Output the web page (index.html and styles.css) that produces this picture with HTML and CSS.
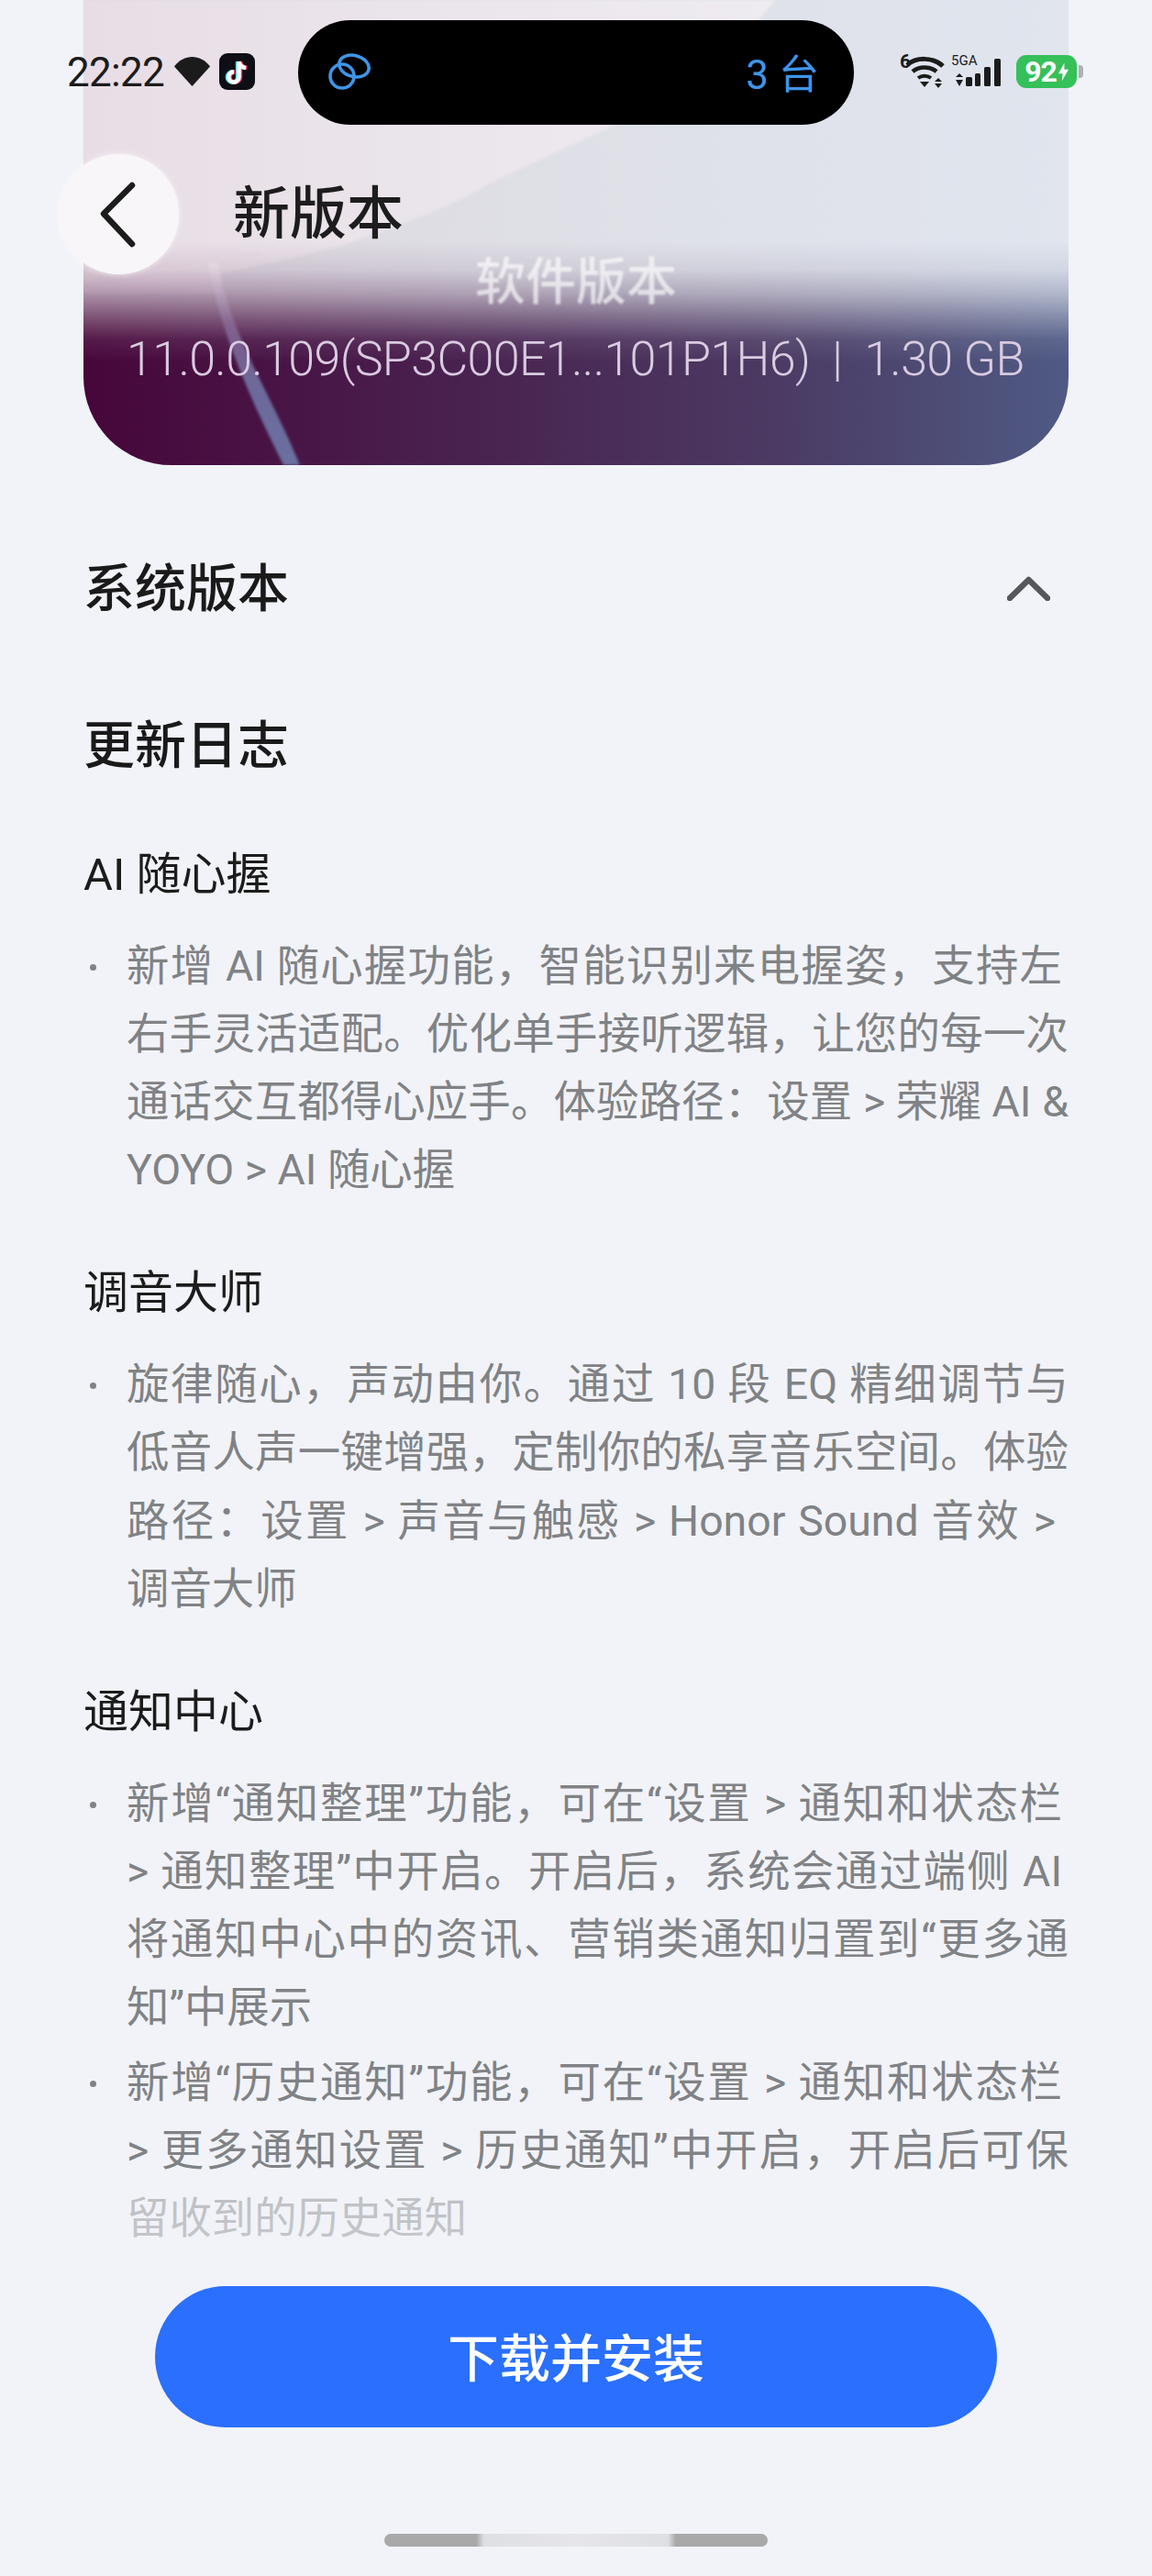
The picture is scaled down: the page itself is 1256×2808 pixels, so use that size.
FILE: index.html
```html
<!DOCTYPE html>
<html lang="zh-CN">
<head>
    <meta charset="UTF-8">
    <meta name="viewport" content="width=device-width, initial-scale=1.0">
    <title>新版本</title>
    <link rel="stylesheet" href="styles.css">
</head>
<body>
    <div class="hero">
        <svg class="hero-art" viewBox="0 0 1074 507" preserveAspectRatio="none">
            <defs>
                <linearGradient id="darkGrad" x1="0" y1="0" x2="1" y2="0">
                    <stop offset="0" stop-color="#47063a"/>
                    <stop offset="0.4" stop-color="#492350"/>
                    <stop offset="0.7" stop-color="#4b3a63"/>
                    <stop offset="1" stop-color="#4f5a84"/>
                </linearGradient>
                <linearGradient id="greyGrad" x1="0" y1="0" x2="1" y2="0">
                    <stop offset="0" stop-color="#ddd6de"/>
                    <stop offset="0.5" stop-color="#dfe0e7"/>
                    <stop offset="1" stop-color="#e0e5ee"/>
                </linearGradient>
                <linearGradient id="arcGrad" x1="0" y1="0" x2="1" y2="0">
                    <stop offset="0" stop-color="#e8dde5"/>
                    <stop offset="0.5" stop-color="#eae5eb"/>
                    <stop offset="1" stop-color="#eeebf1"/>
                </linearGradient>
                <linearGradient id="fadeGrad" x1="0" y1="0" x2="0" y2="1">
                    <stop offset="0.52" stop-color="#fff" stop-opacity="1"/>
                    <stop offset="0.58" stop-color="#fff" stop-opacity="0.9"/>
                    <stop offset="0.63" stop-color="#fff" stop-opacity="0.68"/>
                    <stop offset="0.68" stop-color="#fff" stop-opacity="0.38"/>
                    <stop offset="0.73" stop-color="#fff" stop-opacity="0.1"/>
                    <stop offset="0.78" stop-color="#fff" stop-opacity="0"/>
                </linearGradient>
                <linearGradient id="ribbonGrad" x1="0" y1="0" x2="0" y2="1">
                    <stop offset="0" stop-color="#efe4ec" stop-opacity="0.4"/>
                    <stop offset="0.3" stop-color="#8d6f9c" stop-opacity="0.7"/>
                    <stop offset="0.6" stop-color="#6d6a9a"/>
                    <stop offset="1" stop-color="#6a6f9f"/>
                </linearGradient>
                <mask id="lightMask">
                    <rect width="1074" height="507" fill="url(#fadeGrad)"/>
                </mask>
                <filter id="soft"><feGaussianBlur stdDeviation="1.5"/></filter>
            </defs>
            <rect width="1074" height="507" fill="url(#darkGrad)"/>
            <g mask="url(#lightMask)">
                <rect width="1074" height="507" fill="url(#greyGrad)"/>
                <path d="M754 0 C700 70 640 110 571 140 C520 165 470 185 438 203 C380 235 330 250 284 267 C230 282 180 292 150 297 L150 320 L0 320 L0 0 Z" fill="url(#arcGrad)" filter="url(#soft)"/>
            </g>
            <path d="M136 286 C150 370 190 450 218 507 L236 507 C205 430 162 370 146 286 Z" fill="url(#ribbonGrad)" filter="url(#soft)"/>
        </svg>

        <div class="status-bar">
            <div class="status-left">
                <span class="clock">22:22</span>
                <svg class="fan-icon" viewBox="0 0 39 32"><path d="M0 10.5 C10 -3.5 29 -3.5 39 10.5 L19.5 32 Z" fill="#1b1b1b"/></svg>
                <span class="app-tile">
                    <svg viewBox="0 0 39 40" width="39" height="40">
                        <g fill="none" stroke-width="4.6">
                            <path d="M21.5 8 V25 a5.6 5.6 0 1 1 -5.6 -5.6 M21.5 8 c0.6 4 3.4 6.5 7.5 7" stroke="#3fe0e6" transform="translate(-1.4 1)"/>
                            <path d="M21.5 8 V25 a5.6 5.6 0 1 1 -5.6 -5.6 M21.5 8 c0.6 4 3.4 6.5 7.5 7" stroke="#f4385c" transform="translate(1.4 1)"/>
                            <path d="M21.5 8 V25 a5.6 5.6 0 1 1 -5.6 -5.6 M21.5 8 c0.6 4 3.4 6.5 7.5 7" stroke="#fff" transform="translate(0 1)"/>
                        </g>
                    </svg>
                </span>
            </div>
            <div class="island">
                <svg class="link-icon" viewBox="0 0 47 40" fill="none" stroke="#3f95e6" stroke-width="3.6">
                    <circle cx="15" cy="25" r="13"/>
                    <ellipse cx="28" cy="14" rx="16.5" ry="11.5" transform="rotate(15 28 14)"/>
                </svg>
                <span class="island-count">3 台</span>
            </div>
            <div class="status-right">
                <div class="wifi">
                    <span class="wifi-six">6</span>
                    <svg class="wifi-arcs" viewBox="0 0 44 36" fill="none" stroke="#1b1b1b">
                        <path d="M2 10 C12 1 30 1 41 11" stroke-width="5"/>
                        <path d="M8 17 C15 11 27 11 34 17" stroke-width="4.6"/>
                        <path d="M14 24 C18 21 24 21 28 24" stroke-width="4"/>
                        <path d="M16 28 L26 28 L21 34 Z" fill="#1b1b1b" stroke="none"/>
                        <path d="M36 24 L40 28 L32 28 Z M36 35 L40 30 L32 30 Z" fill="#1b1b1b" stroke="none"/>
                    </svg>
                </div>
                <div class="signal">
                    <span class="signal-label">5GA</span>
                    <svg class="signal-bars" viewBox="0 0 56 31" fill="#1b1b1b">
                        <path d="M4 16 L8 20 L0 20 Z M4 30 L8 23 L0 23 Z"/>
                        <rect x="11" y="20" width="7" height="10" rx="1.5"/>
                        <rect x="21" y="16" width="6" height="14" rx="1.5"/>
                        <rect x="31" y="9" width="7" height="21" rx="1.5"/>
                        <rect x="42" y="0" width="7" height="30" rx="1.5"/>
                    </svg>
                </div>
                <div class="battery">
                    <span class="battery-level">92</span>
                    <svg class="battery-bolt" viewBox="0 0 12 22"><path d="M7 0 L0 13 L5 13 L4 22 L12 8 L7 8 Z" fill="#fff"/></svg>
                </div>
                <span class="battery-nub"></span>
            </div>
        </div>

        <div class="nav-row">
            <button class="back-btn">
                <svg viewBox="0 0 131 131" width="131" height="131"><path d="M80 34 L49 65 L80 98" fill="none" stroke="#1c1c1c" stroke-width="6.5" stroke-linecap="round" stroke-linejoin="round"/></svg>
            </button>
            <h1 class="page-title">新版本</h1>
        </div>

        <div class="hero-label">软件版本</div>
        <div class="hero-version">11.0.0.109(SP3C00E1...101P1H6)&nbsp; | &nbsp;1.30 GB</div>
    </div>

    <div class="content">
        <div class="system-row">
            <h2 class="block-title">系统版本</h2>
            <svg class="chevron" viewBox="0 0 47 27"><path d="M3 24 L23.5 4 L44 24" fill="none" stroke="#55575a" stroke-width="6.5" stroke-linecap="round" stroke-linejoin="round"/></svg>
        </div>

        <h2 class="block-title log-title">更新日志</h2>

        <h3 class="log-heading">AI 随心握</h3>
        <ul class="log-list">
            <li>
                <span class="line line-near">新增 AI 随心握功能，智能识别来电握姿，支持左</span>
                <span class="line">右手灵活适配。优化单手接听逻辑，让您的每一次</span>
                <span class="line">通话交互都得心应手。体验路径：设置 &gt; 荣耀 AI &amp;</span>
                <span class="line-end">YOYO &gt; AI 随心握</span>
            </li>
        </ul>

        <h3 class="log-heading">调音大师</h3>
        <ul class="log-list">
            <li>
                <span class="line">旋律随心，声动由你。通过 10 段 EQ 精细调节与</span>
                <span class="line">低音人声一键增强，定制你的私享音乐空间。体验</span>
                <span class="line line-short">路径：设置 &gt; 声音与触感 &gt; Honor Sound 音效 &gt;</span>
                <span class="line-end">调音大师</span>
            </li>
        </ul>

        <h3 class="log-heading">通知中心</h3>
        <ul class="log-list">
            <li>
                <span class="line line-near">新增“通知整理”功能，可在“设置 &gt; 通知和状态栏</span>
                <span class="line line-near">&gt; 通知整理”中开启。开启后，系统会通过端侧 AI</span>
                <span class="line">将通知中心中的资讯、营销类通知归置到“更多通</span>
                <span class="line-end">知”中展示</span>
            </li>
            <li>
                <span class="line line-near">新增“历史通知”功能，可在“设置 &gt; 通知和状态栏</span>
                <span class="line">&gt; 更多通知设置 &gt; 历史通知”中开启，开启后可保</span>
                <span class="line-end">留收到的历史通知</span>
            </li>
        </ul>
    </div>

    <div class="footer">
        <button class="install-btn">下载并安装</button>
        <div class="home-bar"></div>
    </div>
</body>
</html>
```

FILE: styles.css
```css
* {
    box-sizing: border-box;
}
html, body {
    margin: 0;
    padding: 0;
}
body {
    position: relative;
    height: 2808px;
    overflow: hidden;
    background-color: #f1f3f8;
    font-family: Roboto, "Noto Sans CJK SC", sans-serif;
    color: #1a1a1a;
}
h1, h2, h3, ul {
    margin: 0;
    padding: 0;
    font-weight: 400;
}

/* hero card */
.hero {
    position: relative;
    height: 507px;
    margin: 0 91px;
    padding-top: 22px;
}
.hero-art {
    position: absolute;
    left: 0;
    top: 0;
    width: 100%;
    height: 100%;
    border-radius: 0 0 96px 96px;
}

/* status bar */
.status-bar {
    position: relative;
    display: flex;
    align-items: center;
    height: 114px;
    margin-left: -17px;
}
.status-left {
    display: flex;
    flex: none;
    align-items: center;
    width: 251px;
}
.clock {
    width: 113px;
    margin-top: -1px;
    margin-right: 4px;
    margin-left: -1px;
    font-size: 44px;
    letter-spacing: -0.7px;
    color: #1b1b1b;
}
.fan-icon {
    width: 39px;
    height: 32px;
    margin-top: -2px;
}
.app-tile {
    display: flex;
    width: 39px;
    height: 40px;
    margin-left: 10px;
    margin-top: -2px;
    border-radius: 9px;
    background-color: #0e0e16;
}
.island {
    display: flex;
    flex: none;
    align-items: center;
    justify-content: space-between;
    width: 606px;
    height: 114px;
    padding: 0 38px 0 33px;
    border-radius: 57px;
    background-color: #000;
}
.link-icon {
    width: 47px;
    height: 40px;
    margin-top: -2px;
}
.island-count {
    font-size: 44px;
    color: #3f95e6;
    margin-top: -2px;
}
.status-right {
    display: flex;
    flex: none;
    align-items: flex-end;
    margin-left: 50px;
    height: 40px;
    margin-top: -4px;
}
.wifi {
    position: relative;
    width: 50px;
    height: 38px;
}
.wifi-six {
    position: absolute;
    left: 0;
    top: -2px;
    font-size: 21px;
    font-weight: 700;
    line-height: 21px;
    color: #1b1b1b;
}
.wifi-arcs {
    position: absolute;
    left: 6px;
    top: 2px;
    width: 44px;
    height: 36px;
}
.signal {
    position: relative;
    width: 62px;
    height: 38px;
    margin-left: 6px;
}
.signal-label {
    position: absolute;
    left: 0;
    top: 0;
    font-size: 15px;
    line-height: 15px;
    color: #1b1b1b;
}
.signal-bars {
    position: absolute;
    left: 4px;
    top: 5px;
    width: 58px;
    height: 31px;
}
.battery {
    display: flex;
    align-items: center;
    justify-content: center;
    gap: 2px;
    width: 66px;
    height: 36px;
    margin-left: 9px;
    margin-bottom: 1px;
    border-radius: 11px;
    background-color: #35c05a;
}
.battery-level {
    font-size: 32px;
    font-weight: 700;
    letter-spacing: -1px;
    color: #fff;
}
.battery-bolt {
    width: 11px;
    height: 21px;
}
.battery-nub {
    width: 5px;
    height: 14px;
    margin: 0 0 12px 2px;
    border-radius: 0 4px 4px 0;
    background-color: #aeb0b5;
}

/* back button and title */
.nav-row {
    position: relative;
    display: flex;
    align-items: center;
    margin: 32px 0 0 -27px;
}
.back-btn {
    width: 131px;
    height: 131px;
    padding: 0;
    border: none;
    border-radius: 50%;
    background-color: #f8f6f9;
    box-shadow: 0 0 6px rgba(255, 255, 255, 0.7);
}
.page-title {
    margin-left: 59px;
    font-size: 62px;
    line-height: 70px;
    font-weight: 500;
    color: #1d1d1d;
}
.hero-label {
    position: relative;
    margin-top: -20px;
    text-align: center;
    font-size: 55px;
    line-height: 56px;
    font-weight: 500;
    color: rgba(255, 255, 255, 0.65);
    filter: blur(1.2px);
}
.hero-version {
    position: relative;
    margin: 32px 0 0 47px;
    font-size: 52px;
    line-height: 50px;
    font-weight: 300;
    letter-spacing: -0.65px;
    white-space: nowrap;
    color: #d9cbe0;
}

/* update log */
.content {
    padding: 100px 91px 0;
}
.system-row {
    display: flex;
    align-items: center;
    justify-content: space-between;
    padding-right: 20px;
}
.block-title {
    font-size: 56px;
    line-height: 70px;
    font-weight: 500;
    color: #1a1a1a;
}
.chevron {
    width: 47px;
    height: 27px;
    margin-top: -2px;
}
.log-title {
    margin-top: 101px;
    margin-bottom: 76px;
}
.log-heading {
    font-size: 49px;
    line-height: 60px;
    color: #1c1c1c;
}
.log-list {
    list-style: none;
    margin: 32px 0 68px;
}
.log-list li {
    position: relative;
    padding-left: 47px;
    margin-bottom: 8px;
    font-size: 46.4px;
    line-height: 74.1px;
    white-space: nowrap;
    color: #808285;
}
.log-list li::before {
    content: "";
    position: absolute;
    left: 7px;
    top: 35px;
    width: 7px;
    height: 7px;
    border-radius: 50%;
    background-color: #808285;
}
.line, .line-end {
    display: block;
}
.line {
    text-align: justify;
    text-align-last: justify;
}
.line-near {
    padding-right: 7px;
}
.line-short {
    padding-right: 14px;
}

/* bottom button over the scrolled text */
.footer {
    position: absolute;
    left: 0;
    right: 0;
    bottom: 0;
    height: 438px;
    padding-top: 122px;
    background: linear-gradient(to bottom, rgba(241, 243, 248, 0) 0, rgba(241, 243, 248, 0.55) 22px, rgba(241, 243, 248, 0.6) 70px, #f1f3f8 100px);
}
.install-btn {
    display: block;
    width: 918px;
    height: 154px;
    margin: 0 auto;
    padding: 0 0 6px;
    border: none;
    border-radius: 77px;
    background-color: #2a6ffd;
    font-family: inherit;
    font-size: 56px;
    font-weight: 500;
    color: #fff;
}
.home-bar {
    width: 418px;
    height: 14px;
    margin: 116px auto 0;
    border-radius: 7px;
    background: linear-gradient(to right, #a9a9a9 0, #a9a9a9 24%, #dedfe2 26%, #e6e6ea 50%, #dedfe2 74%, #a9a9a9 76%, #a9a9a9 100%);
}
```
